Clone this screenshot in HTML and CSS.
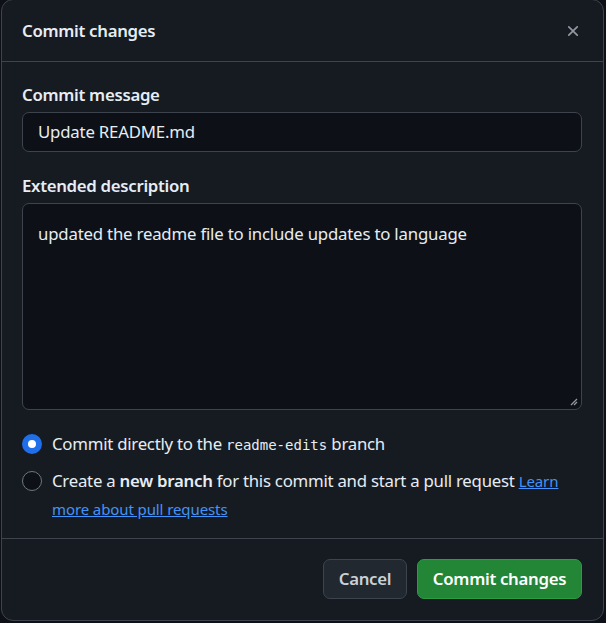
FILE: index.html
```html
<!DOCTYPE html>
<html>
<head>
<meta charset="utf-8">
<link rel="stylesheet" href="styles.css">
</head>
<body>
<div class="dialog">
  <div class="header">
    <h1 class="title">Commit changes</h1>
    <button class="close" aria-label="Close">
      <svg width="16" height="16" viewBox="0 0 16 16"><path d="M3.72 3.72a.75.75 0 0 1 1.06 0L8 6.94l3.22-3.22a.749.749 0 0 1 1.275.326.749.749 0 0 1-.215.734L9.06 8l3.22 3.220a.749.749 0 0 1-.326 1.275.749.749 0 0 1-.734-.215L8 9.06l-3.22 3.22a.751.751 0 0 1-1.042-.018.751.751 0 0 1-.018-1.042L6.94 8 3.72 4.78a.75.75 0 0 1 0-1.06Z" fill="currentColor"/></svg>
    </button>
  </div>
  <div class="body">
    <label class="label">Commit message</label>
    <div class="input">Update README.md</div>
    <label class="label label-ext">Extended description</label>
    <div class="textarea">updated the readme file to include updates to language
      <svg class="grip" width="8" height="8" viewBox="0 0 8 8"><path d="M7 1L1 7M7 4L4 7" stroke="#9198a1" stroke-width="1.3"/></svg>
    </div>
    <div class="options">
      <div class="option">
        <span class="radio checked"></span>
        <span class="opt-text">Commit directly to the <code>readme-edits</code> branch</span>
      </div>
      <div class="option">
        <span class="radio"></span>
        <span class="opt-text">Create a <b>new branch</b> for this commit and start a pull request <a href="#">Learn more about pull requests</a></span>
      </div>
    </div>
  </div>
  <div class="footer">
    <button class="btn btn-cancel">Cancel</button>
    <button class="btn btn-primary">Commit changes</button>
  </div>
</div>
</body>
</html>
```
FILE: styles.css
```css
html, body {
  margin: 0;
  padding: 0;
  background: #0d1117;
}
body {
  font-family: "Noto Sans", "Open Sans", sans-serif;
  color: #e6edf3;
  width: 606px;
  height: 623px;
  overflow: hidden;
}
.dialog {
  box-sizing: border-box;
  margin-left: 1px;
  margin-top: -1px;
  width: 603px;
  height: 622px;
  background: #161b22;
  border: 1px solid #3d444d;
  border-radius: 12px;
  display: flex;
  flex-direction: column;
}
.header {
  height: 62px;
  box-sizing: border-box;
  border-bottom: 1px solid #3d444d;
  display: flex;
  align-items: center;
  justify-content: space-between;
  padding: 0 20px 0 20px;
}
.title {
  margin: 0;
  font-size: 16.8px;
  font-weight: 600;
  letter-spacing: -0.3px;
}
.close {
  background: none;
  border: 0;
  color: #9198a1;
  padding: 0;
  width: 20px;
  height: 20px;
  display: flex;
  align-items: center;
  justify-content: center;
}
.close svg { width: 18px; height: 18px; }
.body {
  flex: 1;
  padding: 21px 21px 0 20px;
  display: flex;
  flex-direction: column;
}
.label {
  font-size: 16.8px;
  font-weight: 600;
  letter-spacing: -0.3px;
  line-height: 24px;
  margin-bottom: 5px;
}
.label-ext { margin-top: 22px; }
.input, .textarea {
  box-sizing: border-box;
  background: #0d1117;
  border: 1px solid #3d444d;
  border-radius: 7px;
  font-size: 16.8px;
  letter-spacing: -0.2px;
  padding: 0 15px;
  color: #e6edf3;
}
.input {
  height: 40px;
  line-height: 38px;
}
.textarea {
  height: 207px;
  padding-top: 18px;
  line-height: 24px;
  position: relative;
}
.grip {
  position: absolute;
  right: 3px;
  bottom: 3px;
}
.options {
  margin-top: 20px;
  display: flex;
  flex-direction: column;
  gap: 8px;
}
.option {
  display: flex;
  align-items: flex-start;
  gap: 10px;
  font-size: 16.8px;
  letter-spacing: -0.25px;
  line-height: 28px;
}
.radio {
  flex: none;
  box-sizing: border-box;
  width: 20px;
  height: 20px;
  border-radius: 50%;
  border: 1px solid #6e7681;
  background: #0d1117;
  margin-top: 4px;
}
.radio.checked {
  border: 6px solid #1f6feb;
  background: #ffffff;
}
.opt-text b { font-weight: 600; }
code {
  font-family: "DejaVu Sans Mono", "Liberation Mono", monospace;
  font-size: 14px;
  letter-spacing: 0;
}
a {
  color: #4493f8;
  text-decoration: underline;
  font-size: 15px;
  letter-spacing: -0.1px;
}
.footer {
  height: 82px;
  box-sizing: border-box;
  border-top: 1px solid #3d444d;
  display: flex;
  align-items: center;
  justify-content: flex-end;
  gap: 10px;
  padding: 0 21px 2px;
}
.btn {
  font-family: inherit;
  height: 40px;
  border-radius: 7px;
  font-size: 16.8px;
  font-weight: 600;
  letter-spacing: -0.3px;
  padding: 0 8px;
  box-sizing: border-box;
  white-space: nowrap;
}
.btn-cancel {
  background: #212830;
  border: 1px solid #3d444d;
  color: #c9d1d9;
  width: 84px;
}
.btn-primary {
  background: #238636;
  border: 1px solid #2d9a44;
  color: #ffffff;
  width: 165px;
}
```
